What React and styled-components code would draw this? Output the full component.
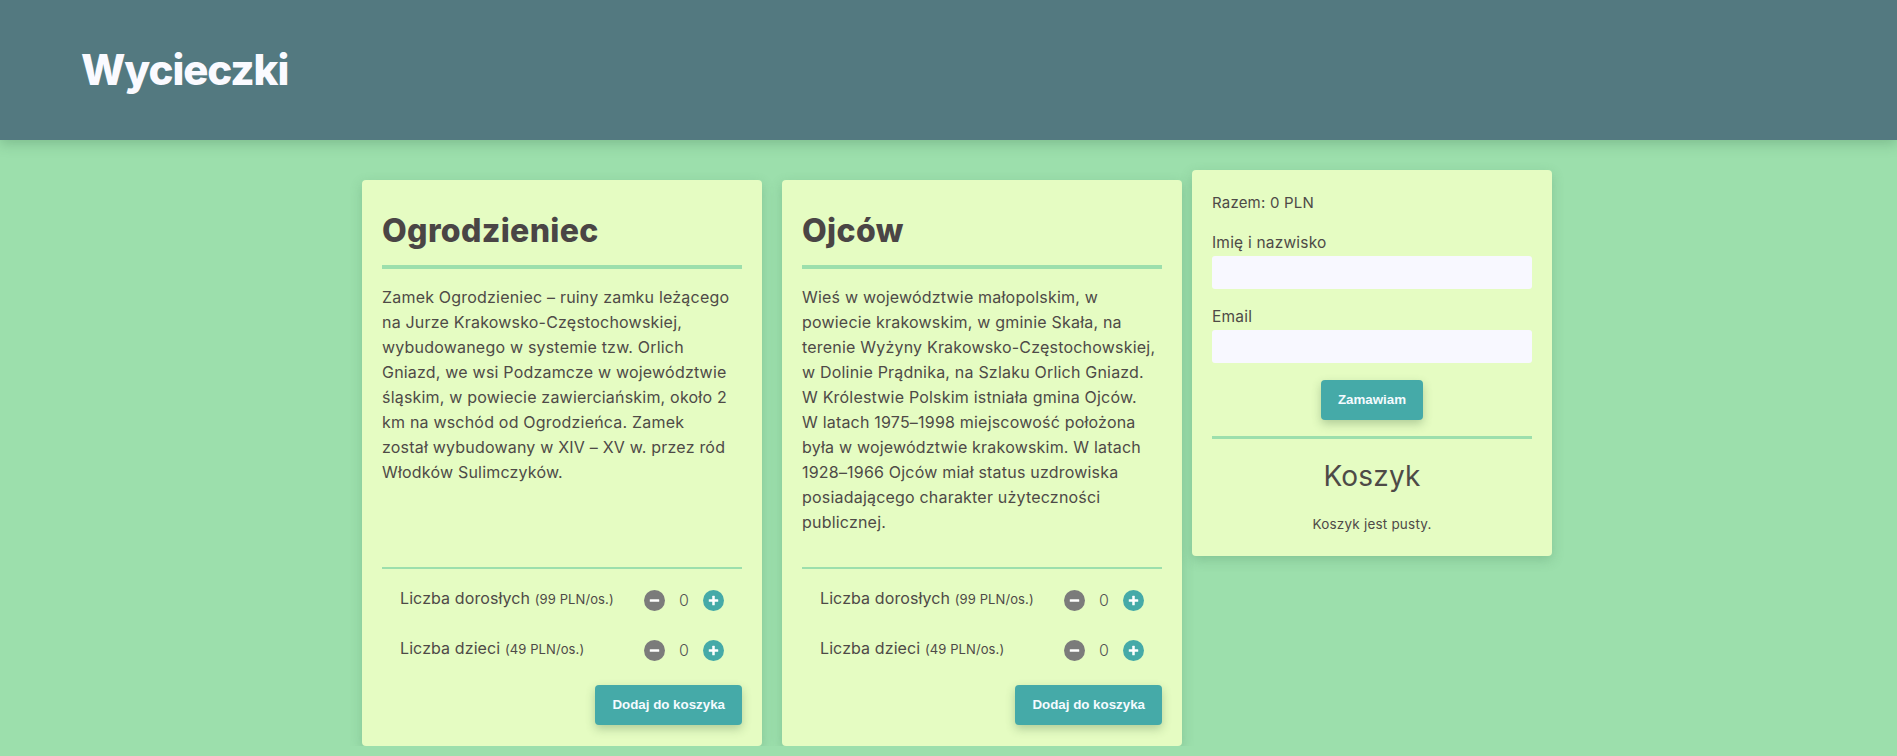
import React, { useState } from "react";
import styled, { createGlobalStyle } from "styled-components";

// opisy trzymane liniami, zeby zawijanie bylo takie samo jak w projekcie
const trips = [
  {
    id: 1,
    name: "Ogrodzieniec",
    description: [
      "Zamek Ogrodzieniec – ruiny zamku leżącego",
      "na Jurze Krakowsko-Częstochowskiej,",
      "wybudowanego w systemie tzw. Orlich",
      "Gniazd, we wsi Podzamcze w województwie",
      "śląskim, w powiecie zawierciańskim, około 2",
      "km na wschód od Ogrodzieńca. Zamek",
      "został wybudowany w XIV – XV w. przez ród",
      "Włodków Sulimczyków.",
    ],
    adultPrice: 99,
    childPrice: 49,
  },
  {
    id: 2,
    name: "Ojców",
    description: [
      "Wieś w województwie małopolskim, w",
      "powiecie krakowskim, w gminie Skała, na",
      "terenie Wyżyny Krakowsko-Częstochowskiej,",
      "w Dolinie Prądnika, na Szlaku Orlich Gniazd.",
      "W Królestwie Polskim istniała gmina Ojców.",
      "W latach 1975–1998 miejscowość położona",
      "była w województwie krakowskim. W latach",
      "1928–1966 Ojców miał status uzdrowiska",
      "posiadającego charakter użyteczności",
      "publicznej.",
    ],
    adultPrice: 99,
    childPrice: 49,
  },
];

const GlobalStyle = createGlobalStyle`
  * { box-sizing: border-box; }
  body {
    margin: 0;
    background: #9cdfac;
    font-family: "Inter", "Open Sans", sans-serif;
    letter-spacing: 0.2px;
    color: #4e4a47;
  }
`;

function CircleIcon({ kind }) {
  return (
    <svg width="21" height="21" viewBox="0 0 20 20">
      <rect x="5.5" y="8.8" width="9" height="2.4" rx="0.5" fill="#fff" />
      {kind === "plus" && <rect x="8.8" y="5.5" width="2.4" height="9" rx="0.5" fill="#fff" />}
    </svg>
  );
}

function Counter({ label, price, value, onChange }) {
  return (
    <Row>
      <RowLabel>
        {label} <Price>({price} PLN/os.)</Price>
      </RowLabel>
      <Controls>
        <RoundButton $variant="minus" onClick={() => onChange(Math.max(0, value - 1))}>
          <CircleIcon kind="minus" />
        </RoundButton>
        <Value>{value}</Value>
        <RoundButton $variant="plus" onClick={() => onChange(value + 1)}>
          <CircleIcon kind="plus" />
        </RoundButton>
      </Controls>
    </Row>
  );
}

function TripCard({ trip }) {
  const [adults, setAdults] = useState(0);
  const [children, setChildren] = useState(0);

  return (
    <Card>
      <TripTitle>{trip.name}</TripTitle>
      <ThickLine />
      <Description>
        {trip.description.map((line, i) => (
          <React.Fragment key={i}>
            {line}
            {i < trip.description.length - 1 && <br />}
          </React.Fragment>
        ))}
      </Description>
      <Footer>
        <ThinLine />
        <Counter label="Liczba dorosłych" price={trip.adultPrice} value={adults} onChange={setAdults} />
        <Counter label="Liczba dzieci" price={trip.childPrice} value={children} onChange={setChildren} />
        <FooterActions>
          <ActionButton type="button">Dodaj do koszyka</ActionButton>
        </FooterActions>
      </Footer>
    </Card>
  );
}

export default function App() {
  return (
    <>
      <GlobalStyle />
      <Header>
        <Logo>Wycieczki</Logo>
      </Header>
      <Main>
        <TripList>
          {trips.map((trip) => (
            <TripCard key={trip.id} trip={trip} />
          ))}
        </TripList>
        <Cart>
          <Total>Razem: 0 PLN</Total>
          <Field>
            <FieldLabel htmlFor="name">Imię i nazwisko</FieldLabel>
            <Input id="name" type="text" />
          </Field>
          <Field>
            <FieldLabel htmlFor="email">Email</FieldLabel>
            <Input id="email" type="email" />
          </Field>
          <OrderRow>
            <ActionButton type="button">Zamawiam</ActionButton>
          </OrderRow>
          <CartLine />
          <CartTitle>Koszyk</CartTitle>
          <EmptyNote>Koszyk jest pusty.</EmptyNote>
        </Cart>
      </Main>
    </>
  );
}

const Header = styled.header`
  height: 140px;
  background: #537980;
  display: flex;
  align-items: center;
  padding-left: 81px;
  box-shadow: 0 4px 12px rgba(40, 90, 60, 0.25);
  position: relative;
`;

const Logo = styled.h1`
  margin: 0 0 2px;
  color: #fafaff;
  font-size: 42px;
  font-weight: 800;
  letter-spacing: -1.1px;
`;

const Main = styled.main`
  display: flex;
  justify-content: center;
  align-items: flex-start;
  gap: 10px;
  padding: 30px 0 0 17px;
`;

const TripList = styled.div`
  display: flex;
  gap: 20px;
  margin-top: 10px;
`;

const Card = styled.article`
  width: 400px;
  background: #e5fcc2;
  border-radius: 4px;
  padding: 20px 20px 21px;
  display: flex;
  flex-direction: column;
  box-shadow: 0 4px 12px rgba(60, 120, 80, 0.25);
`;

const TripTitle = styled.h2`
  margin: 7px 0 0;
  font-size: 32px;
  line-height: 48px;
  font-weight: 800;
  letter-spacing: 0.35px;
  color: #4a4545;
`;

const ThickLine = styled.div`
  height: 4px;
  background: #9cdfac;
  margin-top: 10px;
`;

const Description = styled.p`
  margin: 16px 0 32px;
  font-size: 16px;
  line-height: 25px;
  letter-spacing: 0.2px;
  white-space: nowrap;
`;

const Footer = styled.div`
  margin-top: auto;
`;

const ThinLine = styled.div`
  height: 2px;
  background: #9cdfac;
  margin-bottom: 6px;
`;

const Row = styled.div`
  height: 50px;
  display: flex;
  align-items: center;
  justify-content: space-between;
  padding: 0 18px;
`;

const RowLabel = styled.span`
  font-size: 16px;
  letter-spacing: 0.1px;
  margin-top: -5px;
`;

const Price = styled.span`
  font-size: 13px;
`;

const Controls = styled.div`
  display: flex;
  align-items: center;
`;

const RoundButton = styled.button`
  width: 21px;
  height: 21px;
  padding: 0;
  border: none;
  border-radius: 50%;
  display: flex;
  align-items: center;
  justify-content: center;
  background: ${(p) => (p.$variant === "plus" ? "#45aaa8" : "#7b7b7b")};
  cursor: pointer;
`;

const Value = styled.span`
  width: 38px;
  text-align: center;
  font-size: 16px;
  font-weight: 300;
  color: #555;
`;

const FooterActions = styled.div`
  display: flex;
  justify-content: flex-end;
  margin-top: 10px;
`;

const ActionButton = styled.button`
  background: #45aaa8;
  color: #f4fbff;
  border: none;
  border-radius: 4px;
  padding: 12px 17px;
  font-family: "Liberation Sans", Arial, sans-serif;
  font-size: 13.33px;
  font-weight: 700;
  line-height: 16px;
  letter-spacing: 0;
  box-shadow: 0 4px 10px rgba(60, 100, 60, 0.3);
  cursor: pointer;
`;

const Cart = styled.aside`
  width: 360px;
  background: #e5fcc2;
  border-radius: 4px;
  padding: 20px 20px 21px;
  box-shadow: 0 4px 12px rgba(60, 120, 80, 0.25);
  display: flex;
  flex-direction: column;
`;

const Total = styled.div`
  font-size: 15px;
  line-height: 24px;
  margin-top: 1px;
`;

const Field = styled.div`
  display: flex;
  flex-direction: column;
  margin-top: 16px;
`;

const FieldLabel = styled.label`
  font-size: 15.5px;
  line-height: 24px;
  margin-bottom: 1px;
`;

const Input = styled.input`
  height: 33px;
  border: none;
  border-radius: 3px;
  background: #f8f8ff;
  padding: 0 8px;
  font-size: 15px;
  outline: none;
`;

const OrderRow = styled.div`
  display: flex;
  justify-content: center;
  margin-top: 17px;
`;

const CartLine = styled.div`
  height: 3px;
  background: #9cdfac;
  margin-top: 16px;
`;

const CartTitle = styled.h3`
  margin: 16px 0 0;
  text-align: center;
  font-size: 28px;
  line-height: 43px;
  font-weight: 400;
`;

const EmptyNote = styled.p`
  margin: 16px 0 0;
  text-align: center;
  font-size: 13.5px;
  line-height: 21px;
`;
